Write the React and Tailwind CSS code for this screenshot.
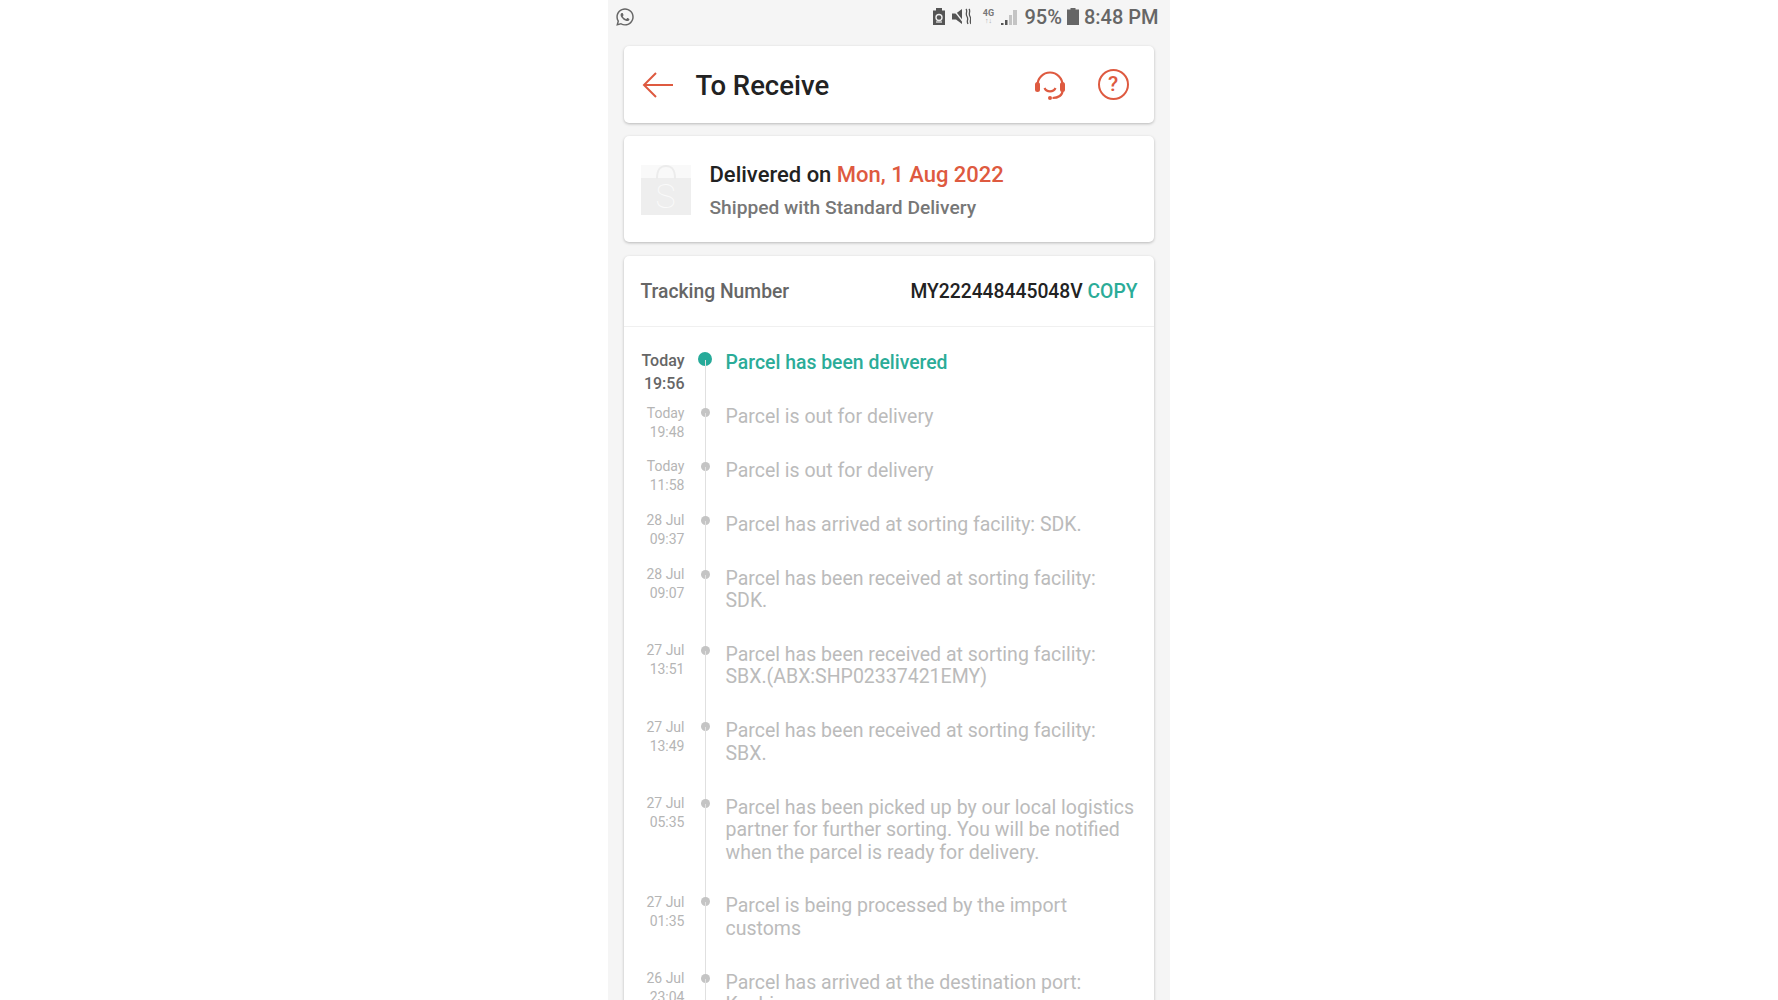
import React from "react";
import { FaWhatsapp } from "react-icons/fa";

const rows = [
  ["Today", "19:48", ["Parcel is out for delivery"]],
  ["Today", "11:58", ["Parcel is out for delivery"]],
  ["28 Jul", "09:37", ["Parcel has arrived at sorting facility: SDK."]],
  ["28 Jul", "09:07", ["Parcel has been received at sorting facility:", "SDK."]],
  ["27 Jul", "13:51", ["Parcel has been received at sorting facility:", "SBX.(ABX:SHP02337421EMY)"]],
  ["27 Jul", "13:49", ["Parcel has been received at sorting facility:", "SBX."]],
  ["27 Jul", "05:35", ["Parcel has been picked up by our local logistics", "partner for further sorting. You will be notified", "when the parcel is ready for delivery."]],
  ["27 Jul", "01:35", ["Parcel is being processed by the import", "customs"]],
  ["26 Jul", "23:04", ["Parcel has arrived at the destination port:", "Kuching"]],
];

function StatusIcons() {
  return (
    <div className="flex items-center">
      <svg width="12" height="17" viewBox="0 0 12 17" className="mr-[7px]">
        <path d="M0 2.500h3V0h6v2.500h3V17H0z" fill="#555" />
        <circle cx="6" cy="9.500" r="3" fill="none" stroke="#eee" strokeWidth="1.400" />
        <path d="M3 14h6" stroke="#eee" strokeWidth="1.200" />
      </svg>
      <svg width="19" height="17" viewBox="0 0 19 17" className="mr-[11px]">
        <path d="M0 5.500h4L10 1v15l-6-4.500H0z" fill="#555" />
        <path d="M1 1l11 14" stroke="#f5f5f5" strokeWidth="1.300" />
        <path d="M14 1c2 2.500-1 4 1 7.500s-1 4 1 7.500M17 1c2 2.500-1 4 1 7.500s-1 4 1 7.500" fill="none" stroke="#555" strokeWidth="1.300" />
      </svg>
      <div className="mr-[7px] flex w-[12px] flex-col items-center text-[9px] leading-[9px] font-bold text-[#777]">
        <span>4G</span>
        <span className="text-[7px] leading-[6px] text-[#aaa]">↑↓</span>
      </div>
      <svg width="16" height="16" viewBox="0 0 16 16" className="mr-[7px]">
        <path d="M0 16v-2h2.500v2zM4 16v-5h2.500v5z" fill="#555" />
        <path d="M8 16V6h3v10zM12 16V1h4v15z" fill="#c4c4c4" />
      </svg>
    </div>
  );
}

function Card({ className, children }) {
  return (
    <div className={"mx-[16px] rounded-[5px] bg-white shadow-[0_1px_3px_rgba(0,0,0,0.25)] " + className}>
      {children}
    </div>
  );
}

export default function App() {
  return (
    <div className="flex h-[1000px] justify-center overflow-hidden bg-white font-['Roboto',sans-serif]">
      <div className="ml-[-1px] w-[562px] bg-[#f5f5f5]">
        <div className="flex h-[33px] items-center justify-between pr-[11px] pl-[7px] text-[#666]">
          <FaWhatsapp size={20} color="#666" />
          <div className="flex items-center">
            <StatusIcons />
            <span className="mt-[1px] text-[20px] leading-none font-medium">95%</span>
            <svg width="12" height="17" viewBox="0 0 12 17" className="mx-[5px]">
              <path d="M3.500 0h5v1.500H12V17H0V1.500h3.500z" fill="#666" />
            </svg>
            <span className="mt-[1px] text-[20px] leading-none font-medium">8:48 PM</span>
          </div>
        </div>

        <Card className="mt-[13px] flex h-[77px] items-center pr-[25px] pl-[18px]">
          <svg width="32" height="28" viewBox="0 0 32 28" fill="none" stroke="#de5a40" strokeWidth="2">
            <path d="M31 14H2M14 2L2 14l12 12" />
          </svg>
          <span className="mt-[3px] ml-[22px] flex-1 text-[27.500px] leading-none font-medium text-[#222]">To Receive</span>
          <svg width="32" height="32" viewBox="0 0 32 32" fill="none" stroke="#de5a40" strokeWidth="2.200" className="mr-[32px]">
            <path d="M3.500 16a12.500 12.500 0 0 1 25 0" />
            <rect x="1" y="13" width="5" height="10" rx="2.500" fill="#de5a40" stroke="none" />
            <rect x="26" y="13" width="5" height="10" rx="2.500" fill="#de5a40" stroke="none" />
            <path d="M10.500 19c2 4.500 9 4.500 11 0" />
            <path d="M28.500 22c0 4-4 7-10 7" />
            <circle cx="16" cy="29" r="2" fill="#de5a40" stroke="none" />
          </svg>
          <div className="flex h-[31px] w-[31px] items-center justify-center rounded-full border-2 border-[#de5a40] text-[21px] leading-none font-medium text-[#de5a40]">
            ?
          </div>
        </Card>

        <Card className="mt-[13px] flex h-[106px] items-center pl-[17px]">
          <div className="relative mt-[1px] flex h-[50px] w-[50px] items-end justify-center bg-[#f9f9f9]">
            <svg width="24" height="14" viewBox="0 0 24 14" fill="none" stroke="#ececec" strokeWidth="2" className="absolute top-0 left-[13px]">
              <path d="M3 14C3 3 7 1 12 1s9 2 9 13" />
            </svg>
            <div className="flex h-[37px] w-full items-center justify-center bg-[#eeeeee] text-[34px] leading-none font-thin text-[#fafafa]">
              S
            </div>
          </div>
          <div className="ml-[19px] pt-[3px]">
            <div className="text-[22px] leading-[26px] font-medium text-[#222]">
              Delivered on <span className="text-[#de5a40]">Mon, 1 Aug 2022</span>
            </div>
            <div className="mt-[9px] text-[19.200px] leading-[22px] font-medium text-[#777]">Shipped with Standard Delivery</div>
          </div>
        </Card>

        <Card className="mt-[14px] h-[800px]">
          <div className="flex h-[71px] items-center justify-between border-b border-[#f0f0f0] pt-[2px] pr-[16px] pl-[17px] text-[19.300px] font-medium">
            <span className="text-[#666]">Tracking Number</span>
            <span className="text-[#222]">
              MY222448445048V <span className="text-[#2bac98]">COPY</span>
            </span>
          </div>

          <div className="pt-[23px]">
            <div className="flex h-[63px]">
              <div className="w-[61px] text-right text-[16px] leading-[22.500px] font-medium text-[#666]">
                <div>Today</div>
                <div>19:56</div>
              </div>
              <div className="relative w-[41px]">
                <div className="absolute top-[2px] left-[13px] h-[14px] w-[14px] rounded-full bg-[#26aa99]" />
                <div className="absolute top-[10px] bottom-0 left-[20px] w-px bg-[#e0e0e0]" />
              </div>
              <div className="pt-[2px] text-[19.400px] leading-[22.500px] font-medium text-[#2bac98]">Parcel has been delivered</div>
            </div>

            {rows.map(([d, t, lines], i) => (
              <div key={i} className="relative flex items-start">
                <div className="h-0 w-[61px] text-right text-[14px] leading-[19px] text-[#b5b5b5]">
                  <div className="mt-[-9.500px]">{d}</div>
                  <div>{t}</div>
                </div>
                <div className="w-[41px]">
                  <div className="absolute top-[-5px] left-[77px] h-[9px] w-[9px] rounded-full bg-[#c4c4c4]" />
                  <div className="absolute top-0 bottom-0 left-[81px] w-px bg-[#e0e0e0]" />
                </div>
                <div className="mt-[-7px] pb-[38.350px] text-[19.500px] leading-[22.500px] text-[#bbbbbb]">
                  {lines.map((l) => (
                    <div key={l}>{l}</div>
                  ))}
                </div>
              </div>
            ))}
          </div>
        </Card>
      </div>
    </div>
  );
}
